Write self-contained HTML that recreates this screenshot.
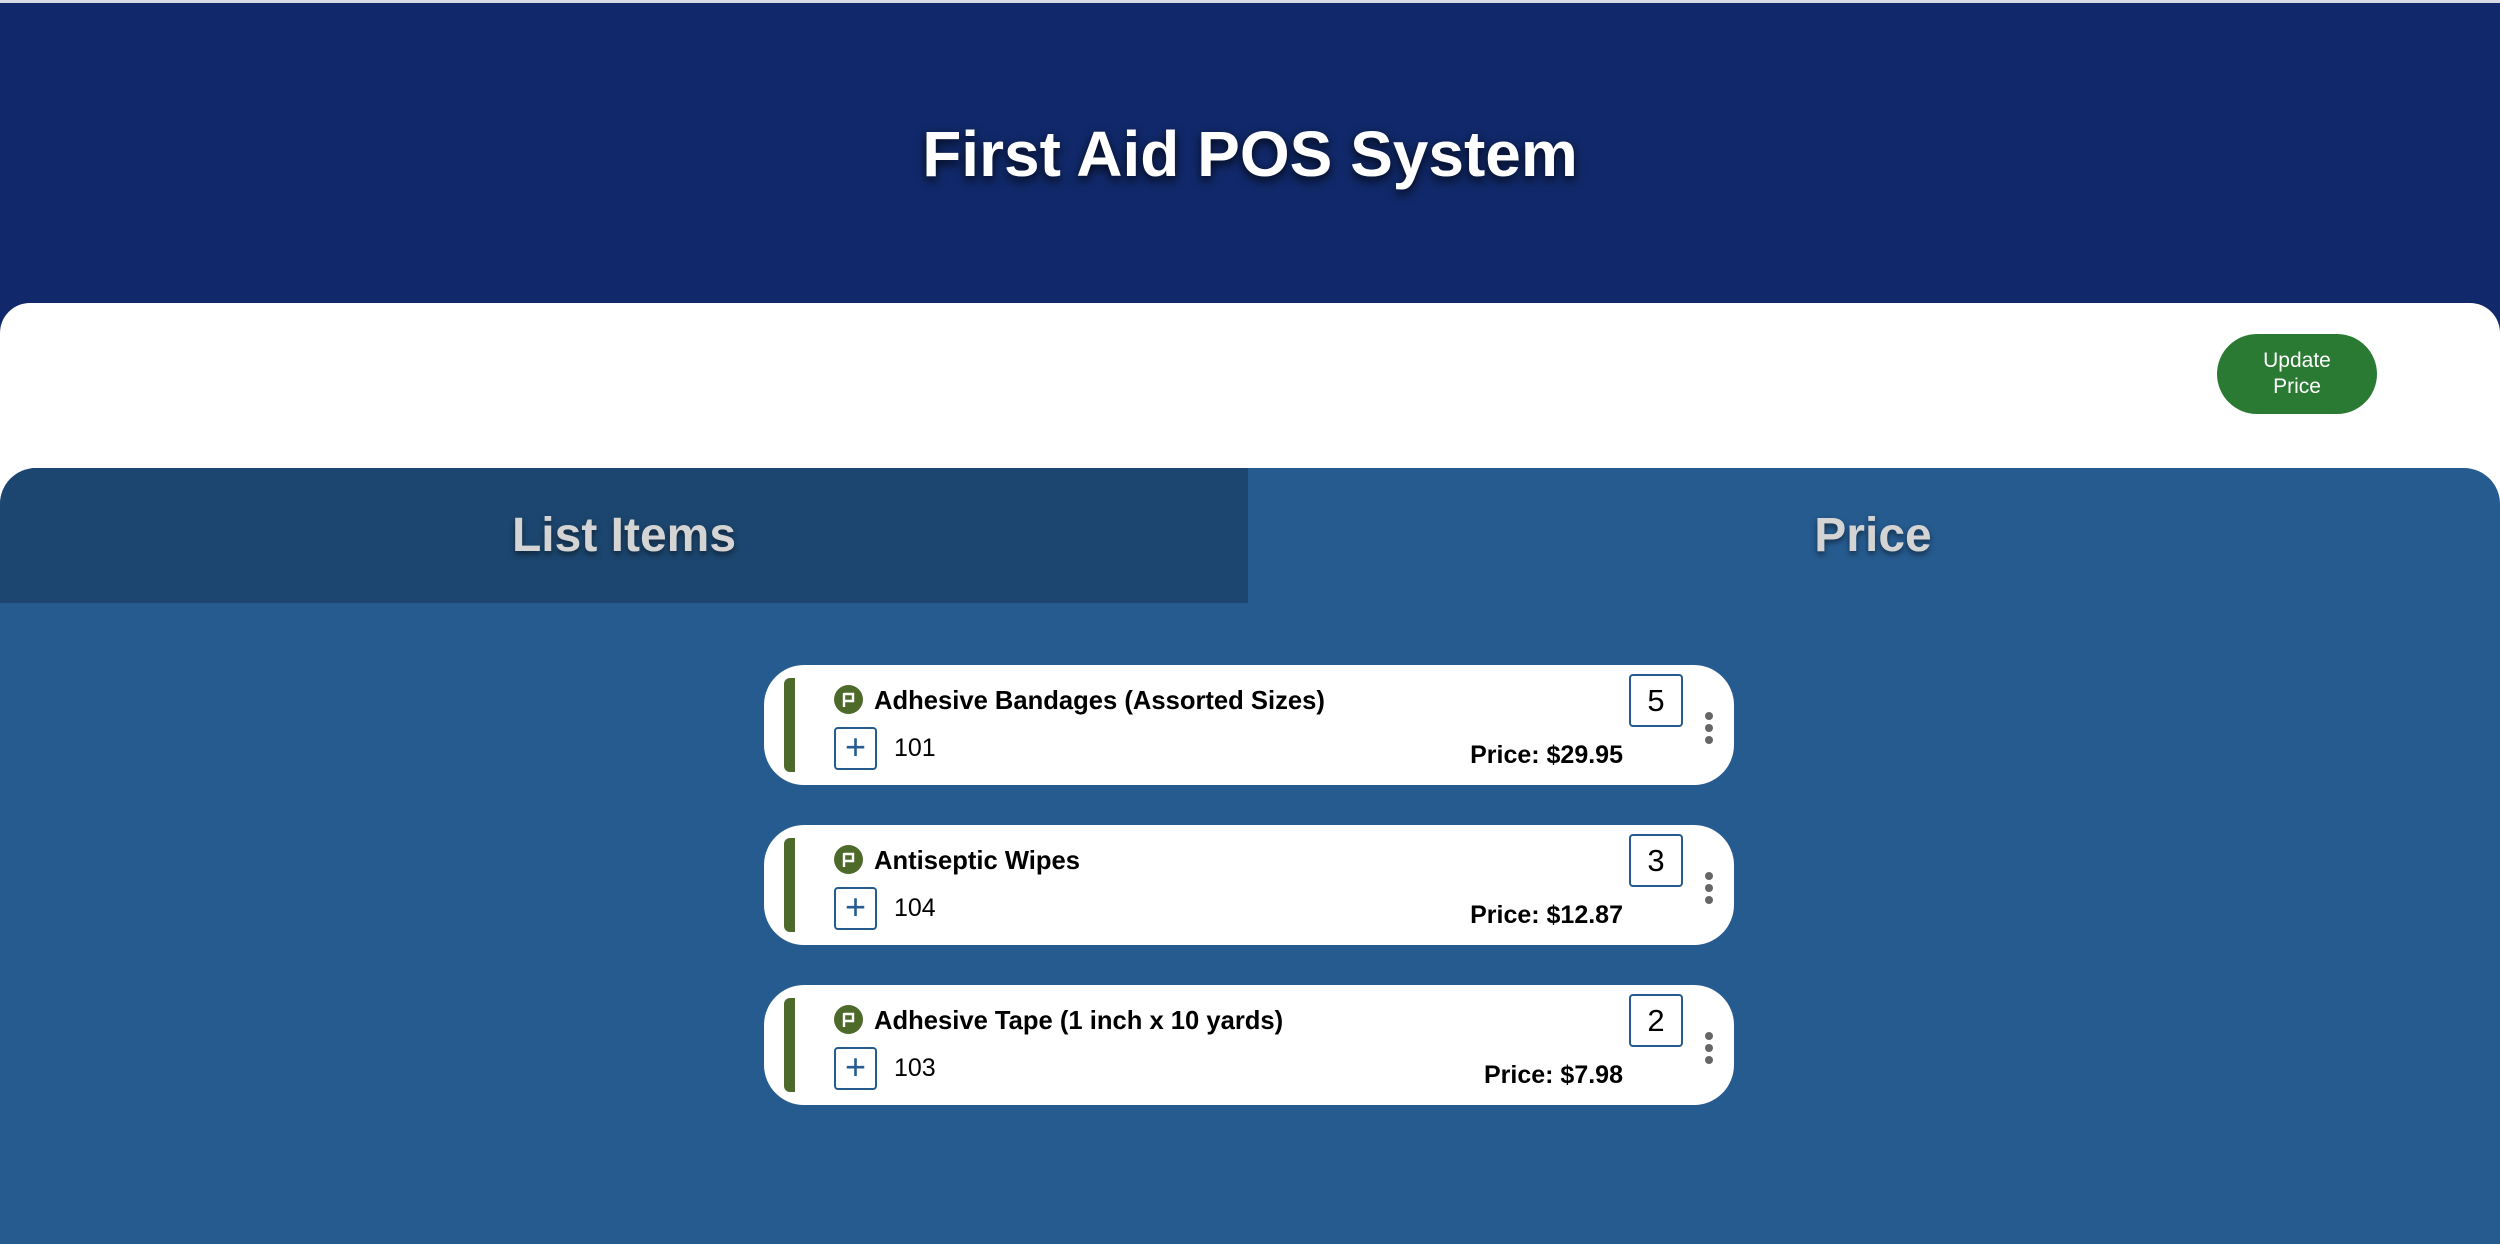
<!DOCTYPE html>
<html><head><meta charset="utf-8"><style>
*{margin:0;padding:0;box-sizing:border-box}
body{width:2500px;height:1244px;overflow:hidden;background:#265b8f;font-family:"Liberation Sans",Arial,sans-serif;position:relative}
.top{position:absolute;left:0;top:0;width:2500px;height:3px;background:#d8dbe3}
.hdr{position:absolute;left:0;top:3px;width:2500px;height:340px;background:#11296a}
.hdr h1{position:absolute;left:0;right:0;top:114px;text-align:center;color:#fff;font-size:64px;font-weight:bold;text-shadow:0 4px 10px rgba(0,0,0,.8)}
.white{position:absolute;left:0;top:303px;width:2500px;height:200px;background:#fff;border-radius:30px 30px 0 0}
.btn{position:absolute;left:2217px;top:334px;width:160px;height:80px;border-radius:40px;background:#2b7a33;color:#fff;font-size:21px;text-align:center;line-height:26px;padding-top:14px}
.blue{position:absolute;left:0;top:468px;width:2500px;height:776px;background:#265b8f;border-radius:36px 36px 0 0;overflow:hidden}
.tab{position:absolute;top:0;height:135px;width:1250px;text-align:center;line-height:135px;font-size:48px;font-weight:bold;color:#d4d4d4;text-shadow:0 3px 6px rgba(0,0,0,.5)}
.t1{left:0;background:#1c466f;width:1248px}
.t2{left:1248px}
.card{position:absolute;left:764px;width:970px;height:120px;background:#fff;border-radius:40px}
.bar{position:absolute;left:20px;top:13px;width:11px;height:94px;background:#4e6a2a;border-radius:6px 0 0 6px}
.flag{position:absolute;left:70px;top:20px;width:29px;height:29px;border-radius:50%;background:#4e6a2a}
.name{position:absolute;left:110px;top:21px;font-size:25.6px;font-weight:bold;color:#000;line-height:30px}
.plus{position:absolute;left:70px;top:62px;width:43px;height:43px;border:2px solid #265b8f;border-radius:4px;color:#265b8f;font-size:36px;line-height:36px;text-align:center}
.code{position:absolute;left:130px;top:69px;font-size:25px;color:#000}
.qty{position:absolute;left:865px;top:9px;width:54px;height:53px;border:2px solid #265b8f;border-radius:4px;font-size:31px;text-align:center;line-height:49px;color:#000}
.price{position:absolute;right:111px;top:76px;font-size:25px;font-weight:bold;color:#000}
.dots{position:absolute;left:941px;top:47px;width:8px}
.dots i{display:block;width:8px;height:8px;border-radius:50%;background:#666;margin-bottom:4px}
</style></head><body>
<div class="top"></div>
<div class="hdr"><h1>First Aid POS System</h1></div>
<div class="white"></div>
<div class="btn">Update<br>Price</div>
<div class="blue">
<div class="tab t1">List Items</div>
<div class="tab t2">Price</div>
</div>

<div class="card" style="top:665px">
<div class="bar"></div>
<div class="flag"><svg width="29" height="29" viewBox="0 0 29 29"><path d="M10 8v14M10 9h9v7h-9" stroke="#fff" stroke-width="2.4" fill="none"/></svg></div>
<div class="name">Adhesive Bandages (Assorted Sizes)</div>
<div class="plus">+</div><div class="code">101</div>
<div class="qty">5</div>
<div class="price">Price: $29.95</div>
<div class="dots"><i></i><i></i><i></i></div>
</div>

<div class="card" style="top:825px">
<div class="bar"></div>
<div class="flag"><svg width="29" height="29" viewBox="0 0 29 29"><path d="M10 8v14M10 9h9v7h-9" stroke="#fff" stroke-width="2.4" fill="none"/></svg></div>
<div class="name">Antiseptic Wipes</div>
<div class="plus">+</div><div class="code">104</div>
<div class="qty">3</div>
<div class="price">Price: $12.87</div>
<div class="dots"><i></i><i></i><i></i></div>
</div>

<div class="card" style="top:985px">
<div class="bar"></div>
<div class="flag"><svg width="29" height="29" viewBox="0 0 29 29"><path d="M10 8v14M10 9h9v7h-9" stroke="#fff" stroke-width="2.4" fill="none"/></svg></div>
<div class="name">Adhesive Tape (1 inch x 10 yards)</div>
<div class="plus">+</div><div class="code">103</div>
<div class="qty">2</div>
<div class="price">Price: $7.98</div>
<div class="dots"><i></i><i></i><i></i></div>
</div>
</body></html>
